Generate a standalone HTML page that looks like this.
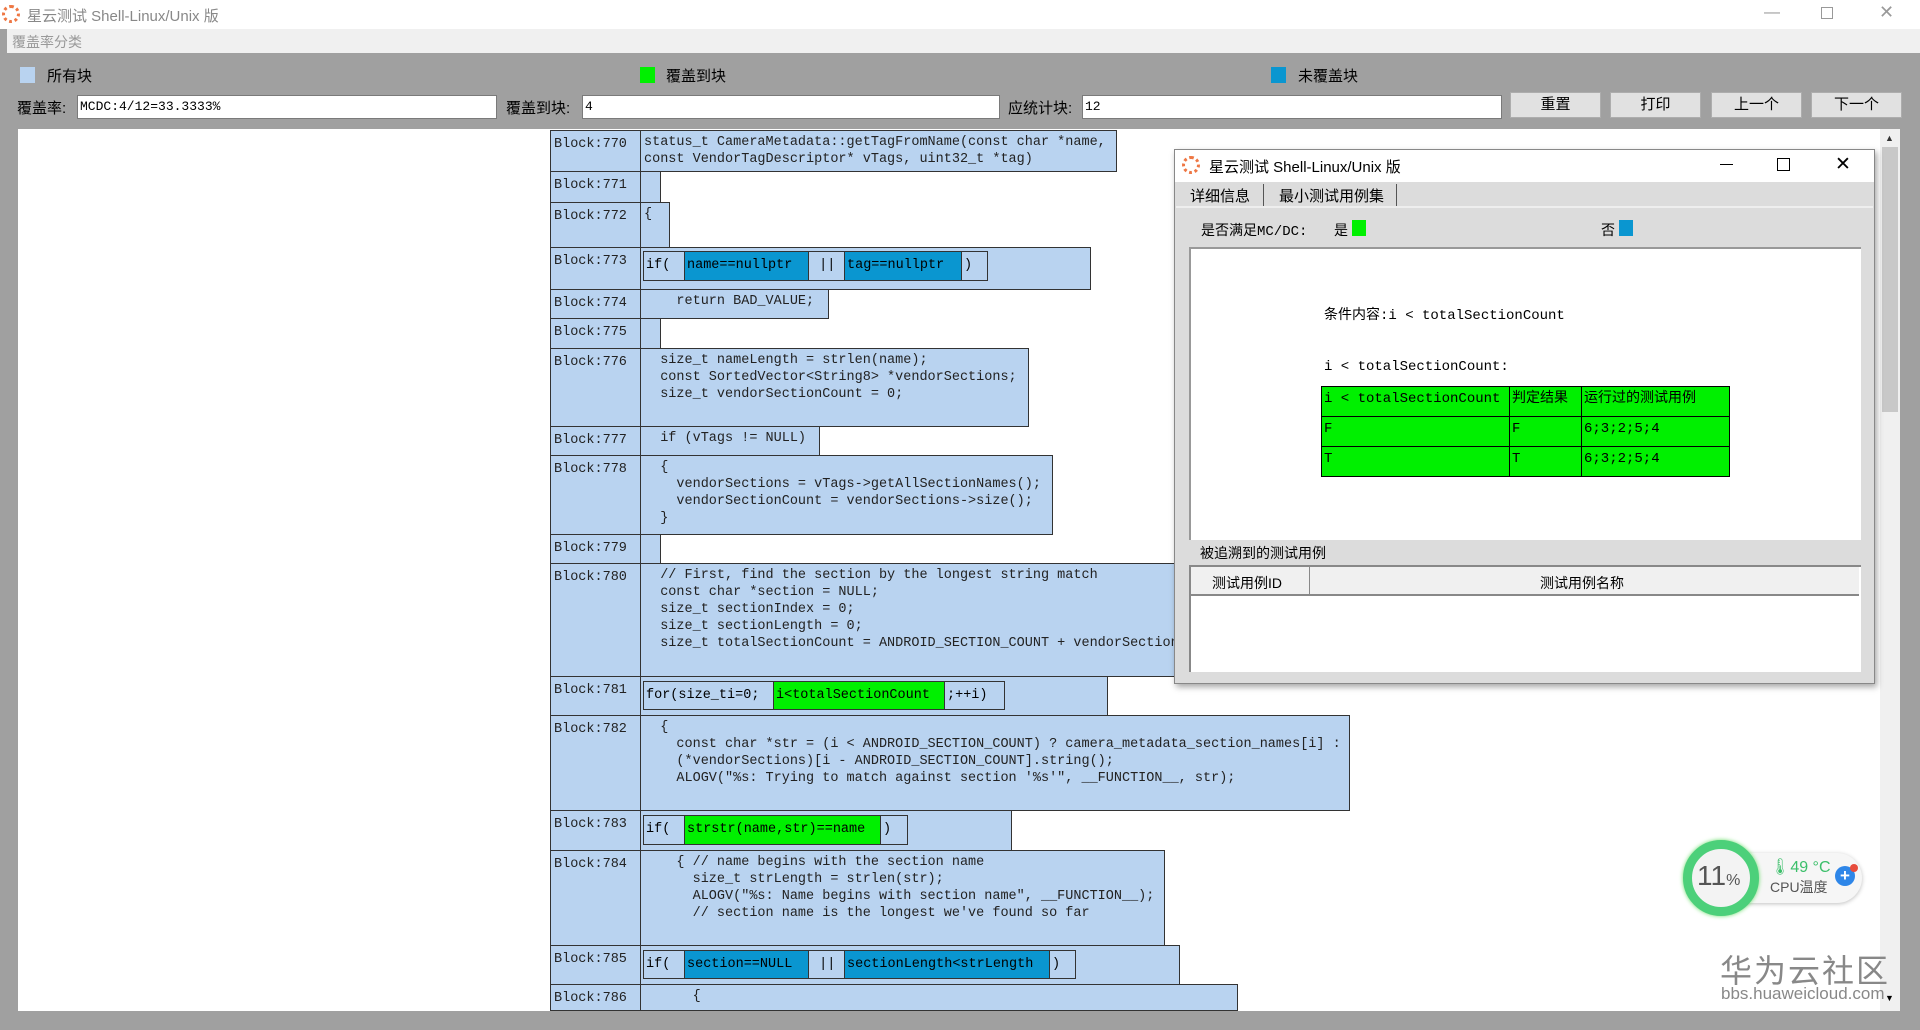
<!DOCTYPE html>
<html><head><meta charset="utf-8"><style>
*{margin:0;padding:0;box-sizing:border-box}
body{width:1920px;height:1030px;overflow:hidden;background:#a0a0a0;position:relative;font-family:"Liberation Sans","Noto Sans CJK SC",sans-serif;font-size:14px;color:#000}
.a{position:absolute}
.mono{font-family:"Liberation Mono","Noto Sans CJK SC",monospace;font-size:13.5px;line-height:17px;white-space:pre}
.lbl{background:#b9d3f0;border:1px solid #333;padding:5px 3px;color:#222}
.code{background:#b9d3f0;border:1px solid #333;padding:3px 3px;color:#222;overflow:hidden}
.in{background:#b9d3f0;border:1px solid #333;padding:2px 2px;line-height:24px}
.bl{background:#0a96d0}
.gr{background:#00f000}
.btn{background:#e1e1e1;border:1px solid #adadad;text-align:center;line-height:24px;font-size:15px}
.inp{background:#fff;border:1px solid #7a7a7a;font-family:"Liberation Mono",monospace;font-size:13px;line-height:22px;padding-left:2px}
</style></head><body>
<div class="a" style="left:0;top:0;width:1920px;height:29px;background:#fff"></div>
<div class="a" style="left:2px;top:5px;width:18px;height:18px;border-radius:50%;border:3px dotted #e74;"></div>
<div class="a" style="left:27px;top:5px;font-size:15px;color:#888">星云测试 Shell-Linux/Unix 版</div>
<div class="a" style="left:1764px;top:4px;font-size:16px;color:#999">—</div>
<div class="a" style="left:1821px;top:7px;width:12px;height:12px;border:1px solid #999"></div>
<div class="a" style="left:1879px;top:2px;font-size:18px;color:#999">✕</div>
<div class="a" style="left:7px;top:29px;width:1913px;height:24px;background:#f0f0f0"></div>
<div class="a" style="left:12px;top:32px;font-size:14px;color:#999">覆盖率分类</div>
<div class="a" style="left:20px;top:67px;width:15px;height:16px;background:#b9d3f0"></div>
<div class="a" style="left:47px;top:65px;font-size:15px">所有块</div>
<div class="a" style="left:640px;top:67px;width:15px;height:16px;background:#00f000"></div>
<div class="a" style="left:666px;top:65px;font-size:15px">覆盖到块</div>
<div class="a" style="left:1271px;top:67px;width:15px;height:16px;background:#0a96d0"></div>
<div class="a" style="left:1298px;top:65px;font-size:15px">未覆盖块</div>
<div class="a" style="left:17px;top:97px;font-size:15px">覆盖率:</div>
<div class="a inp" style="left:77px;top:95px;width:420px;height:24px">MCDC:4/12=33.3333%</div>
<div class="a" style="left:506px;top:97px;font-size:15px">覆盖到块:</div>
<div class="a inp" style="left:582px;top:95px;width:418px;height:24px">4</div>
<div class="a" style="left:1008px;top:97px;font-size:15px">应统计块:</div>
<div class="a inp" style="left:1082px;top:95px;width:420px;height:24px">12</div>
<div class="a btn" style="left:1510px;top:92px;width:91px;height:26px">重置</div>
<div class="a btn" style="left:1610px;top:92px;width:91px;height:26px">打印</div>
<div class="a btn" style="left:1711px;top:92px;width:91px;height:26px">上一个</div>
<div class="a btn" style="left:1811px;top:92px;width:91px;height:26px">下一个</div>
<div class="a" style="left:18px;top:129px;width:1862px;height:882px;background:#fff"></div>
<div class="a" style="left:1880px;top:129px;width:20px;height:882px;background:#f0f0f0"></div>
<div class="a" style="left:1882px;top:147px;width:16px;height:265px;background:#c8c8c8"></div>
<div class="a" style="left:1885px;top:133px;font-size:9px;color:#333">▲</div>
<div class="a" style="left:1885px;top:993px;font-size:9px;color:#000">▼</div>

<div class="a lbl mono" style="left:550px;top:130px;width:91px;height:42px">Block:770</div>
<div class="a code mono" style="left:640px;top:130px;width:477px;height:42px">status_t CameraMetadata::getTagFromName(const char *name,
const VendorTagDescriptor* vTags, uint32_t *tag)</div>
<div class="a lbl mono" style="left:550px;top:171px;width:91px;height:32px">Block:771</div>
<div class="a code mono" style="left:640px;top:171px;width:21px;height:32px"></div>
<div class="a lbl mono" style="left:550px;top:202px;width:91px;height:46px">Block:772</div>
<div class="a code mono" style="left:640px;top:202px;width:30px;height:46px">{</div>
<div class="a lbl mono" style="left:550px;top:247px;width:91px;height:43px">Block:773</div>
<div class="a code mono" style="left:640px;top:247px;width:451px;height:43px"></div>
<div class="a in mono" style="left:643px;top:251px;width:42px;height:30px">if(</div>
<div class="a in bl mono" style="left:684px;top:251px;width:125px;height:30px">name==nullptr</div>
<div class="a in mono" style="left:808px;top:251px;width:37px;height:30px"> ||</div>
<div class="a in bl mono" style="left:844px;top:251px;width:118px;height:30px">tag==nullptr</div>
<div class="a in mono" style="left:961px;top:251px;width:27px;height:30px">)</div>
<div class="a lbl mono" style="left:550px;top:289px;width:91px;height:30px">Block:774</div>
<div class="a code mono" style="left:640px;top:289px;width:189px;height:30px">    return BAD_VALUE;</div>
<div class="a lbl mono" style="left:550px;top:318px;width:91px;height:31px">Block:775</div>
<div class="a code mono" style="left:640px;top:318px;width:21px;height:31px"></div>
<div class="a lbl mono" style="left:550px;top:348px;width:91px;height:79px">Block:776</div>
<div class="a code mono" style="left:640px;top:348px;width:389px;height:79px">  size_t nameLength = strlen(name);
  const SortedVector&lt;String8&gt; *vendorSections;
  size_t vendorSectionCount = 0;</div>
<div class="a lbl mono" style="left:550px;top:426px;width:91px;height:30px">Block:777</div>
<div class="a code mono" style="left:640px;top:426px;width:180px;height:30px">  if (vTags != NULL)</div>
<div class="a lbl mono" style="left:550px;top:455px;width:91px;height:80px">Block:778</div>
<div class="a code mono" style="left:640px;top:455px;width:413px;height:80px">  {
    vendorSections = vTags-&gt;getAllSectionNames();
    vendorSectionCount = vendorSections-&gt;size();
  }</div>
<div class="a lbl mono" style="left:550px;top:534px;width:91px;height:30px">Block:779</div>
<div class="a code mono" style="left:640px;top:534px;width:21px;height:30px"></div>
<div class="a lbl mono" style="left:550px;top:563px;width:91px;height:114px">Block:780</div>
<div class="a code mono" style="left:640px;top:563px;width:560px;height:114px">  // First, find the section by the longest string match
  const char *section = NULL;
  size_t sectionIndex = 0;
  size_t sectionLength = 0;
  size_t totalSectionCount = ANDROID_SECTION_COUNT + vendorSectionCount;</div>
<div class="a lbl mono" style="left:550px;top:676px;width:91px;height:40px">Block:781</div>
<div class="a code mono" style="left:640px;top:676px;width:468px;height:40px"></div>
<div class="a in mono" style="left:643px;top:681px;width:131px;height:29px">for(size_ti=0;</div>
<div class="a in gr mono" style="left:773px;top:681px;width:172px;height:29px">i&lt;totalSectionCount</div>
<div class="a in mono" style="left:944px;top:681px;width:61px;height:29px">;++i)</div>
<div class="a lbl mono" style="left:550px;top:715px;width:91px;height:96px">Block:782</div>
<div class="a code mono" style="left:640px;top:715px;width:710px;height:96px">  {
    const char *str = (i &lt; ANDROID_SECTION_COUNT) ? camera_metadata_section_names[i] :
    (*vendorSections)[i - ANDROID_SECTION_COUNT].string();
    ALOGV("%s: Trying to match against section '%s'", __FUNCTION__, str);</div>
<div class="a lbl mono" style="left:550px;top:810px;width:91px;height:41px">Block:783</div>
<div class="a code mono" style="left:640px;top:810px;width:372px;height:41px"></div>
<div class="a in mono" style="left:643px;top:815px;width:42px;height:30px">if(</div>
<div class="a in gr mono" style="left:684px;top:815px;width:197px;height:30px">strstr(name,str)==name</div>
<div class="a in mono" style="left:880px;top:815px;width:28px;height:30px">)</div>
<div class="a lbl mono" style="left:550px;top:850px;width:91px;height:96px">Block:784</div>
<div class="a code mono" style="left:640px;top:850px;width:525px;height:96px">    { // name begins with the section name
      size_t strLength = strlen(str);
      ALOGV("%s: Name begins with section name", __FUNCTION__);
      // section name is the longest we've found so far</div>
<div class="a lbl mono" style="left:550px;top:945px;width:91px;height:40px">Block:785</div>
<div class="a code mono" style="left:640px;top:945px;width:540px;height:40px"></div>
<div class="a in mono" style="left:643px;top:950px;width:42px;height:29px">if(</div>
<div class="a in bl mono" style="left:684px;top:950px;width:125px;height:29px">section==NULL</div>
<div class="a in mono" style="left:808px;top:950px;width:37px;height:29px"> ||</div>
<div class="a in bl mono" style="left:844px;top:950px;width:206px;height:29px">sectionLength&lt;strLength</div>
<div class="a in mono" style="left:1049px;top:950px;width:27px;height:29px">)</div>
<div class="a lbl mono" style="left:550px;top:984px;width:91px;height:27px">Block:786</div>
<div class="a code mono" style="left:640px;top:984px;width:598px;height:27px">      {</div>
<div class="a" style="left:0;top:1011px;width:1920px;height:19px;background:#a0a0a0"></div>

<div class="a" style="left:1720px;top:853px;width:142px;height:50px;border-radius:25px;background:#f6f6f6;box-shadow:0 1px 4px rgba(0,0,0,.25)"></div>
<div class="a" style="left:1683px;top:840px;width:76px;height:76px;border-radius:50%;border:9px solid #4cd07a;background:#f3f3f3;box-shadow:0 0 4px #6d6"></div>
<div class="a" style="left:1697px;top:860px;font-size:28px;color:#555">11<span style="font-size:16px">%</span></div>
<div class="a" style="left:1770px;top:857px;font-size:16px;color:#3bbf6a">🌡49 °C</div>
<div class="a" style="left:1770px;top:877px;font-size:14px;color:#555">CPU温度</div>
<div class="a" style="left:1835px;top:866px;width:20px;height:20px;border-radius:50%;background:#2e86e8;color:#fff;text-align:center;font-size:17px;line-height:19px;font-weight:bold">+</div>
<div class="a" style="left:1850px;top:864px;width:8px;height:8px;border-radius:50%;background:#e74c3c"></div>
<div class="a" style="left:1720px;top:946px;font-size:32px;color:#888;letter-spacing:2px">华为云社区</div>
<div class="a" style="left:1721px;top:984px;font-size:17px;color:#888">bbs.huaweicloud.com</div>

<div class="a" style="left:1174px;top:149px;width:701px;height:535px;background:#dcdcdc;border:1px solid #888;box-shadow:2px 3px 6px rgba(0,0,0,.35)"></div>
<div class="a" style="left:1175px;top:150px;width:699px;height:32px;background:#fff"></div>
<div class="a" style="left:1182px;top:156px;width:18px;height:18px;border-radius:50%;border:3px dotted #e74"></div>
<div class="a" style="left:1209px;top:156px;font-size:15px">星云测试 Shell-Linux/Unix 版</div>
<div class="a" style="left:1720px;top:164px;width:13px;height:1px;background:#000"></div>
<div class="a" style="left:1777px;top:158px;width:13px;height:13px;border:1px solid #000"></div>
<div class="a" style="left:1835px;top:153px;font-size:19px">✕</div>
<div class="a" style="left:1190px;top:185px;font-size:15px">详细信息</div>
<div class="a" style="left:1263px;top:184px;width:1px;height:22px;background:#555"></div>
<div class="a" style="left:1279px;top:185px;font-size:15px">最小测试用例集</div>
<div class="a" style="left:1396px;top:184px;width:1px;height:22px;background:#555"></div>
<div class="a" style="left:1176px;top:206px;width:697px;height:2px;background:#eee"></div>
<div class="a" style="left:1201px;top:220px;font-size:14px">是否满足<span style="font-family:'Liberation Mono',monospace">MC/DC:</span></div>
<div class="a" style="left:1334px;top:220px;font-size:14px">是</div>
<div class="a" style="left:1352px;top:220px;width:14px;height:16px;background:#00f000"></div>
<div class="a" style="left:1601px;top:220px;font-size:14px">否</div>
<div class="a" style="left:1619px;top:220px;width:14px;height:16px;background:#0a96d0"></div>
<div class="a" style="left:1189px;top:247px;width:672px;height:293px;background:#fff;border-top:2px solid #999;border-left:2px solid #999"></div>
<div class="a mono" style="left:1324px;top:308px;font-size:14px">条件内容:i &lt; totalSectionCount</div>
<div class="a mono" style="left:1324px;top:359px;font-size:14px">i &lt; totalSectionCount:</div>
<div class="a mono" style="left:1321px;top:386px;width:409px;height:91px;background:#00f000;border:1px solid #000;font-size:14px">
<div class="a" style="left:187px;top:0;width:1px;height:89px;background:#000"></div>
<div class="a" style="left:259px;top:0;width:1px;height:89px;background:#000"></div>
<div class="a" style="left:0;top:29px;width:407px;height:1px;background:#000"></div>
<div class="a" style="left:0;top:59px;width:407px;height:1px;background:#000"></div>
<div class="a" style="left:2px;top:4px">i &lt; totalSectionCount</div>
<div class="a" style="left:190px;top:4px">判定结果</div>
<div class="a" style="left:262px;top:4px">运行过的测试用例</div>
<div class="a" style="left:2px;top:34px">F</div><div class="a" style="left:190px;top:34px">F</div><div class="a" style="left:262px;top:34px">6;3;2;5;4</div>
<div class="a" style="left:2px;top:64px">T</div><div class="a" style="left:190px;top:64px">T</div><div class="a" style="left:262px;top:64px">6;3;2;5;4</div>
</div>
<div class="a" style="left:1200px;top:543px;font-size:14px">被追溯到的测试用例</div>
<div class="a" style="left:1189px;top:565px;width:672px;height:107px;background:#fff;border-top:2px solid #888;border-left:2px solid #888"></div>
<div class="a" style="left:1191px;top:567px;width:668px;height:29px;background:#f0f0f0;border-bottom:2px solid #888"></div>
<div class="a" style="left:1309px;top:567px;width:1px;height:29px;background:#888"></div>
<div class="a" style="left:1212px;top:573px;font-size:14px">测试用例ID</div>
<div class="a" style="left:1540px;top:573px;font-size:14px">测试用例名称</div>
</body></html>
